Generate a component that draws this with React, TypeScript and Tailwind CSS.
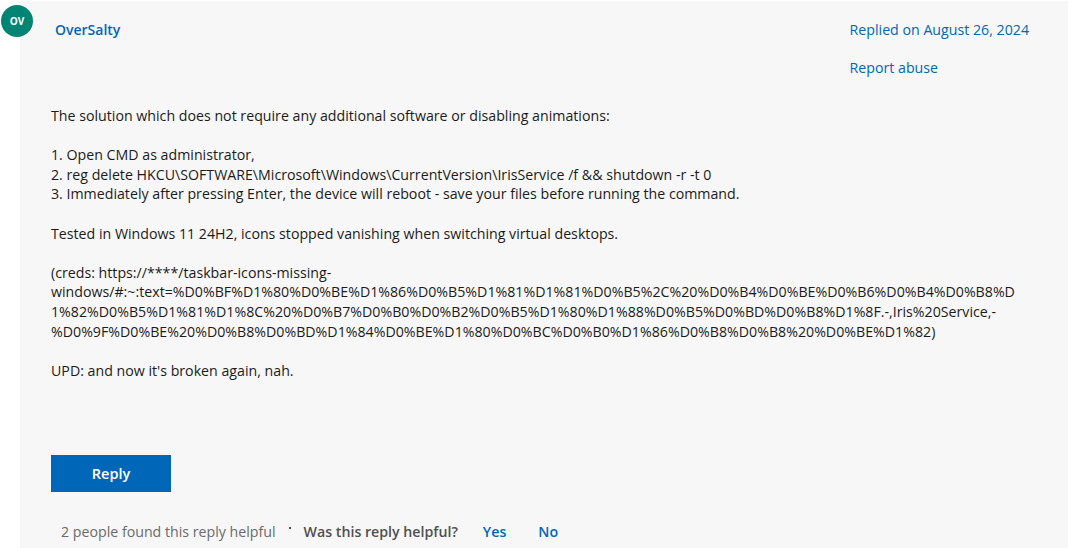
import React from "react";

export default function App() {
  const font = { fontFamily: '"Open Sans", "Noto Sans", sans-serif' };
  return (
    <div className="relative w-[1068px] h-[548px] bg-white overflow-hidden" style={font}>
      <div className="absolute left-[1px] top-[5px] w-[32px] h-[32px] rounded-full bg-[#008575] text-white flex items-center justify-center text-[10px] font-bold z-10">
        OV
      </div>
      <div className="ml-[20px] mt-[1px] h-[547px] bg-[#f7f7f7] pl-[31px] pr-[39px] text-[14.2px] leading-[19.6px] text-[#1b1b1b]">
        <div className="flex justify-between pt-[19px]">
          <div className="pl-[4px] font-semibold text-[#0067b8] text-[14px] leading-[20px]">OverSalty</div>
          <div className="flex flex-col gap-[18px] text-[#0067b8] leading-[20px]">
            <span>Replied on August 26, 2024</span>
            <span>Report abuse</span>
          </div>
        </div>
        <div className="mt-[28px]">
          <p>The solution which does not require any additional software or disabling animations:</p>
          <p className="mt-[19.6px]">1. Open CMD as administrator,</p>
          <p>2. reg delete HKCU\SOFTWARE\Microsoft\Windows\CurrentVersion\IrisService /f &amp;&amp; shutdown -r -t 0</p>
          <p>3. Immediately after pressing Enter, the device will reboot - save your files before running the command.</p>
          <p className="mt-[19.6px]">Tested in Windows 11 24H2, icons stopped vanishing when switching virtual desktops.</p>
          <div className="mt-[19.6px]">
            <p>(creds: https://****/taskbar-icons-missing-</p>
            <p>windows/#:~:text=%D0%BF%D1%80%D0%BE%D1%86%D0%B5%D1%81%D1%81%D0%B5%2C%20%D0%B4%D0%BE%D0%B6%D0%B4%D0%B8%D</p>
            <p>1%82%D0%B5%D1%81%D1%8C%20%D0%B7%D0%B0%D0%B2%D0%B5%D1%80%D1%88%D0%B5%D0%BD%D0%B8%D1%8F.-,Iris%20Service,-</p>
            <p>%D0%9F%D0%BE%20%D0%B8%D0%BD%D1%84%D0%BE%D1%80%D0%BC%D0%B0%D1%86%D0%B8%D0%B8%20%D0%BE%D1%82)</p>
          </div>
          <p className="mt-[19.6px]">UPD: and now it's broken again, nah.</p>
        </div>
        <button className="mt-[75px] w-[120px] h-[37px] bg-[#0067b8] text-white font-semibold text-[14.5px] flex items-center justify-center">
          Reply
        </button>
        <div className="mt-[30px] flex items-center text-[14.2px] leading-[20px]">
          <span className="ml-[10px] text-[#6b6b6b]">2 people found this reply helpful</span>
          <span className="ml-[13px] mb-[9px] w-[2px] h-[2px] bg-[#505050]"></span>
          <span className="ml-[13px] font-semibold text-[#505050]">Was this reply helpful?</span>
          <span className="ml-[25px] font-semibold text-[#0067b8]">Yes</span>
          <span className="ml-[32px] font-semibold text-[#0067b8]">No</span>
        </div>
      </div>
    </div>
  );
}
